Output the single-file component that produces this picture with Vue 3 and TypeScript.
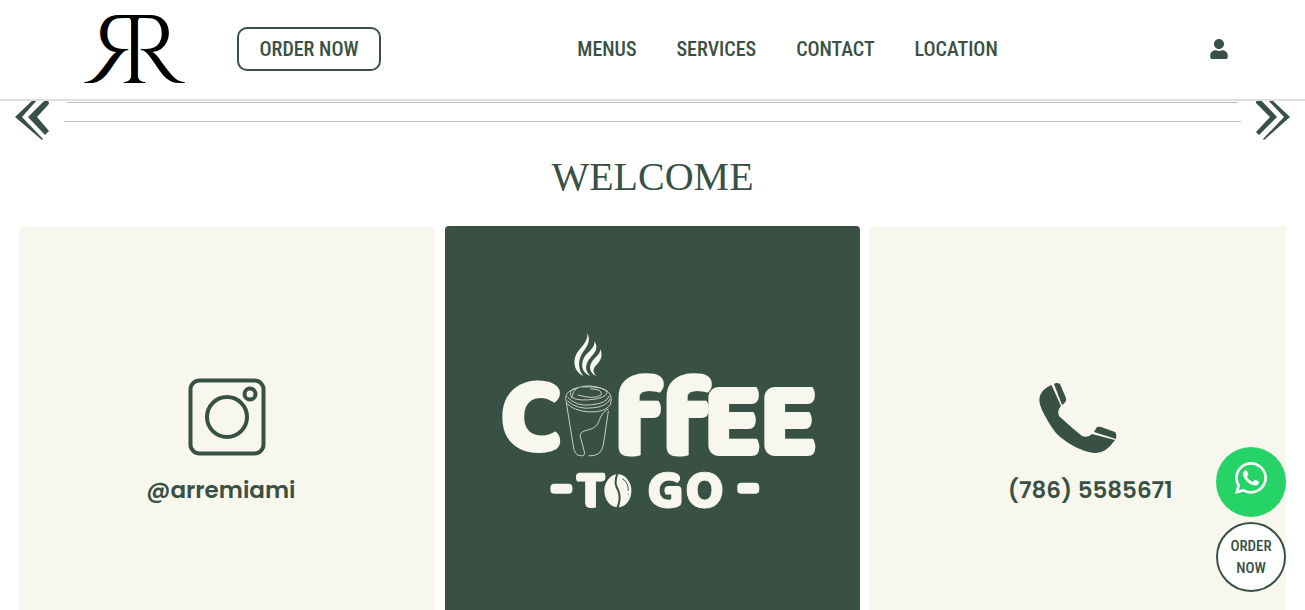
<script setup lang="ts">
interface NavItem {
  label: string
  href: string
}

const navItems: NavItem[] = [
  { label: 'MENUS', href: '#menus' },
  { label: 'SERVICES', href: '#services' },
  { label: 'CONTACT', href: '#contact' },
  { label: 'LOCATION', href: '#location' },
]
</script>

<template>
  <div class="page">
    <header class="header">
      <div class="brand">
        <a class="logo" href="#home" aria-label="Home">
          <svg viewBox="0 0 102 72" width="102" height="72" aria-hidden="true">
            <text class="mono" x="34" y="70">R</text>
            <text class="mono" x="34" y="70" transform="translate(101 0) scale(-1 1)">R</text>
          </svg>
        </a>
        <button class="order" type="button">ORDER NOW</button>
      </div>
      <nav class="nav" aria-label="Main">
        <a v-for="item in navItems" :key="item.label" :href="item.href">{{ item.label }}</a>
      </nav>
      <a class="user" href="#account" aria-label="Account">
        <svg viewBox="0 0 448 512" width="18" height="20" aria-hidden="true">
          <path fill="currentColor" d="M224 256c70.700 0 128-57.300 128-128S294.700 0 224 0 96 57.300 96 128s57.300 128 128 128zm89.600 32h-16.700c-22.200 10.200-46.900 16-72.900 16s-50.600-5.800-72.900-16h-16.700C60.200 288 0 348.200 0 422.400V464c0 26.500 21.500 48 48 48h352c26.500 0 48-21.500 48-48v-41.600c0-74.200-60.200-134.400-134.400-134.400z" />
        </svg>
      </a>
    </header>

    <main>
      <section class="slider" aria-label="Highlights">
        <button class="arrow" type="button" aria-label="Previous">
          <svg viewBox="0 0 34 39" width="34" height="39" aria-hidden="true">
            <path d="M0 16L19-2L23-2L7 16L28 38L27 39Z" />
            <path d="M13 16L28 1Q30-1 33 0Q35 2 33 4L22 16L34 30L30 34Z" />
          </svg>
        </button>
        <div class="track"><hr /></div>
        <button class="arrow" type="button" aria-label="Next">
          <svg viewBox="0 0 34 39" width="34" height="39" aria-hidden="true">
            <path d="M34 16L15-2L11-2L28 16L7 38L8 39Z" />
            <path d="M21 16L4-2L-1 1L14 16L0 31L3 34Z" />
          </svg>
        </button>
      </section>

      <h1>WELCOME</h1>

      <section class="cards">
        <a class="card" href="#instagram">
          <svg class="icon" viewBox="0 0 78 78" width="78" height="78" aria-hidden="true">
            <g fill="none" stroke="#395144" stroke-width="4">
              <rect x="2.500" y="2.500" width="73" height="73" rx="9" />
              <circle cx="39" cy="39" r="20" />
              <circle cx="62" cy="16" r="5.500" />
            </g>
          </svg>
          <span class="handle">@arremiami</span>
        </a>

        <a class="card dark" href="#menus" aria-label="Coffee to go">
          <svg viewBox="445 226 415 416" aria-hidden="true">
            <g class="steam">
              <path d="M587 333C591 342 586 347 582 353C577 361 578 370 583 376C574 372 572 362 576 354C580 347 588 342 587 333Z" />
              <path d="M594 341C599 349 594 353 589 359C584 366 585 371 590 376C581 373 580 364 584 357C588 351 595 348 594 341Z" />
              <path d="M600 349C603 357 600 361 595 366C592 370 593 373 596 376C589 373 588 367 592 361C596 356 600 354 600 349Z" />
            </g>
            <g class="big">
              <text x="499" y="450">C</text>
              <text class="tall" x="613" y="454">f</text>
              <text class="tall" x="661" y="454">f</text>
              <text x="702" y="455">E</text>
              <text x="758" y="455">E</text>
            </g>
            <g class="cup">
              <path d="M566 403L573 447Q574 456 581 456Q585 456 584 452L580 437Q578 432 588 430Q597 428 599 420Q602 412 608 409" />
              <path d="M608 411L603 445Q601 457 588 456" />
              <path d="M566 403Q563 393 572 390Q588 382 605 390Q613 394 610 405Q604 413 588 412Q573 411 566 403Z" />
              <path d="M567 397Q576 407 590 405Q606 404 609 396M567 401Q577 410 592 408Q606 407 610 399" />
              <path d="M577 388Q569 389 570 395Q572 401 588 400Q604 399 607 393Q605 386 582 387M590 389Q602 389 601 395Q594 400 577 395M571 398Q573 390 577 388" />
            </g>
            <g class="small">
              <text x="575" y="507">T</text>
              <text x="647" y="507">G</text>
              <text x="685" y="507">O</text>
            </g>
            <g class="steam">
              <rect x="550" y="484" width="22" height="10" rx="4" />
              <rect x="737" y="483" width="22" height="11" rx="4" />
              <ellipse cx="617.500" cy="491" rx="13.500" ry="16.500" />
            </g>
            <path class="crease" d="M617 474Q613 483 618 491Q621 499 617 508" />
            <path class="shine" d="M622 479Q628 482 628 491M628 494V495" />
          </svg>
        </a>

        <a class="card" href="tel:7865585671">
          <svg class="icon" viewBox="1038 378 80 78" width="80" height="78" aria-hidden="true">
            <g fill="#395144">
              <path d="M1051.500 385Q1038 391 1039.500 402C1040 408 1050 426 1057 434C1066 443 1084 453 1096 453Q1106 453 1115 440L1092 434Q1088 438 1082 436C1073 429 1066 422 1059 416Q1057 410 1061 406Z" />
              <path d="M1054 384Q1057 382 1060 384L1066 398Q1067 402 1062 405Z" />
              <path d="M1094 432L1097 427Q1099 426 1104 428L1115 432Q1117 434 1116 439Z" />
            </g>
          </svg>
          <span class="phone">(786) 5585671</span>
        </a>
      </section>
    </main>

    <div class="floating">
      <a class="bubble whatsapp" href="#whatsapp" aria-label="WhatsApp">
        <svg viewBox="0 32 448 448" width="32" height="32" aria-hidden="true">
          <path fill="#fff" d="M380.900 97.100C339 55.100 283.200 32 223.900 32c-122.400 0-222 99.600-222 222 0 39.100 10.200 77.300 29.600 111L0 480l117.700-30.900c32.400 17.700 68.900 27 106.100 27h.1c122.300 0 224.100-99.600 224.100-222 0-59.300-25.200-115-67.100-157zm-157 341.600c-33.200 0-65.700-8.900-94-25.700l-6.700-4-69.800 18.300L72 359.200l-4.400-7c-18.500-29.400-28.200-63.300-28.200-98.200 0-101.700 82.800-184.500 184.600-184.500 49.300 0 95.600 19.200 130.400 54.100 34.800 34.900 56.200 81.200 56.100 130.500 0 101.800-84.900 184.600-186.600 184.600zm101.200-138.200c-5.500-2.800-32.800-16.200-37.900-18-5.100-1.900-8.800-2.800-12.500 2.800-3.700 5.600-14.300 18-17.600 21.800-3.200 3.700-6.500 4.200-12 1.400-32.600-16.300-54-29.100-75.500-66-5.700-9.800 5.700-9.100 16.300-30.300 1.800-3.700.9-6.900-.5-9.700-1.400-2.800-12.500-30.100-17.100-41.200-4.500-10.800-9.100-9.300-12.500-9.500-3.200-.2-6.900-.2-10.600-.2-3.700 0-9.700 1.400-14.800 6.900-5.100 5.600-19.400 19-19.400 46.300 0 27.300 19.900 53.700 22.600 57.400 2.800 3.700 39.100 59.700 94.800 83.800 35.200 15.200 49 16.500 66.600 13.900 10.700-1.600 32.800-13.400 37.400-26.400 4.600-13 4.600-24.100 3.200-26.400-1.300-2.500-5-3.900-10.500-6.600z" />
        </svg>
      </a>
      <button class="bubble now" type="button">ORDER NOW</button>
    </div>
  </div>
</template>

<style>
body {
  margin: 0;
  background: #fff;
}
</style>

<style scoped>
.page {
  height: 100vh;
  overflow: hidden;
  color: #395144;
  font-family: "Roboto Condensed", "Liberation Sans Narrow", Roboto, sans-serif;
}
a {
  color: inherit;
  text-decoration: none;
}
button {
  font: inherit;
  color: inherit;
  cursor: pointer;
}
svg {
  display: block;
}
.header {
  display: flex;
  align-items: center;
  justify-content: space-between;
  box-sizing: border-box;
  height: 101px;
  padding: 0 77px 2px 84px;
  border-bottom: 2px solid #dfdfdf;
}
.brand {
  display: flex;
  align-items: center;
  gap: 51px;
}
.logo svg {
  overflow: visible;
}
.mono {
  font-family: Cinzel, "Liberation Serif", serif;
  font-size: 97px;
  font-weight: 500;
  fill: #000;
}
.order {
  width: 144px;
  height: 44px;
  padding: 0;
  border: 2px solid #395144;
  border-radius: 10px;
  background: #fff;
  font-size: 20px;
  font-weight: 500;
}
.nav {
  display: flex;
  gap: 40px;
  margin-right: 16px;
  font-size: 20px;
  font-weight: 500;
}
.slider {
  display: flex;
  align-items: flex-start;
  gap: 15px;
  padding: 0 15px;
}
.arrow {
  padding: 0;
  border: 0;
  background: none;
  fill: #395144;
}
.track {
  flex: 1;
  height: 20px;
  border-bottom: 1px solid #bbb;
}
hr {
  margin: 1px 3px 0;
  border: 0;
  border-top: 1px solid #bbb;
}
h1 {
  margin: 14px 0 26px;
  font: 400 40px/46px "Liberation Serif", serif;
  text-align: center;
}
.cards {
  display: grid;
  grid-template-columns: repeat(3, 1fr);
  gap: 10px;
  padding: 0 19px;
}
.card {
  display: flex;
  flex-direction: column;
  align-items: center;
  aspect-ratio: 1;
  border-radius: 4px;
  overflow: hidden;
  background: #f8f7ee;
  font: 600 23px/32px Poppins, Inter, sans-serif;
}
.icon {
  margin: 152px 0 18px;
}
.handle {
  padding-right: 12px;
}
.phone {
  padding-left: 24px;
}
.dark {
  background: #395144;
}
.dark svg {
  width: 100%;
}
.big,
.small {
  font-family: "Baloo 2", "Open Sans", sans-serif;
  font-weight: 800;
  fill: #f8f7ee;
  stroke: #f8f7ee;
  stroke-linejoin: round;
}
.big {
  font-size: 110px;
  stroke-width: 2px;
}
.tall {
  font-size: 118px;
}
.small {
  font-size: 55px;
  stroke-width: 1px;
}
.steam {
  fill: #f8f7ee;
}
.cup {
  fill: none;
  stroke: #c9cec3;
  stroke-width: 1px;
}
.crease,
.shine {
  fill: none;
  stroke: #395144;
  stroke-width: 2px;
}
.shine {
  stroke-width: 1px;
}
.floating {
  position: fixed;
  right: 19px;
  bottom: 18px;
  display: flex;
  flex-direction: column;
  gap: 5px;
}
.bubble {
  display: flex;
  align-items: center;
  justify-content: center;
  box-sizing: border-box;
  width: 70px;
  height: 70px;
  border-radius: 50%;
}
.whatsapp {
  padding-bottom: 8px;
  background: #25d366;
}
.now {
  padding: 0 10px;
  border: 2px solid #395144;
  background: #fff;
  font-size: 15px;
  font-weight: 500;
  line-height: 22px;
}
</style>
